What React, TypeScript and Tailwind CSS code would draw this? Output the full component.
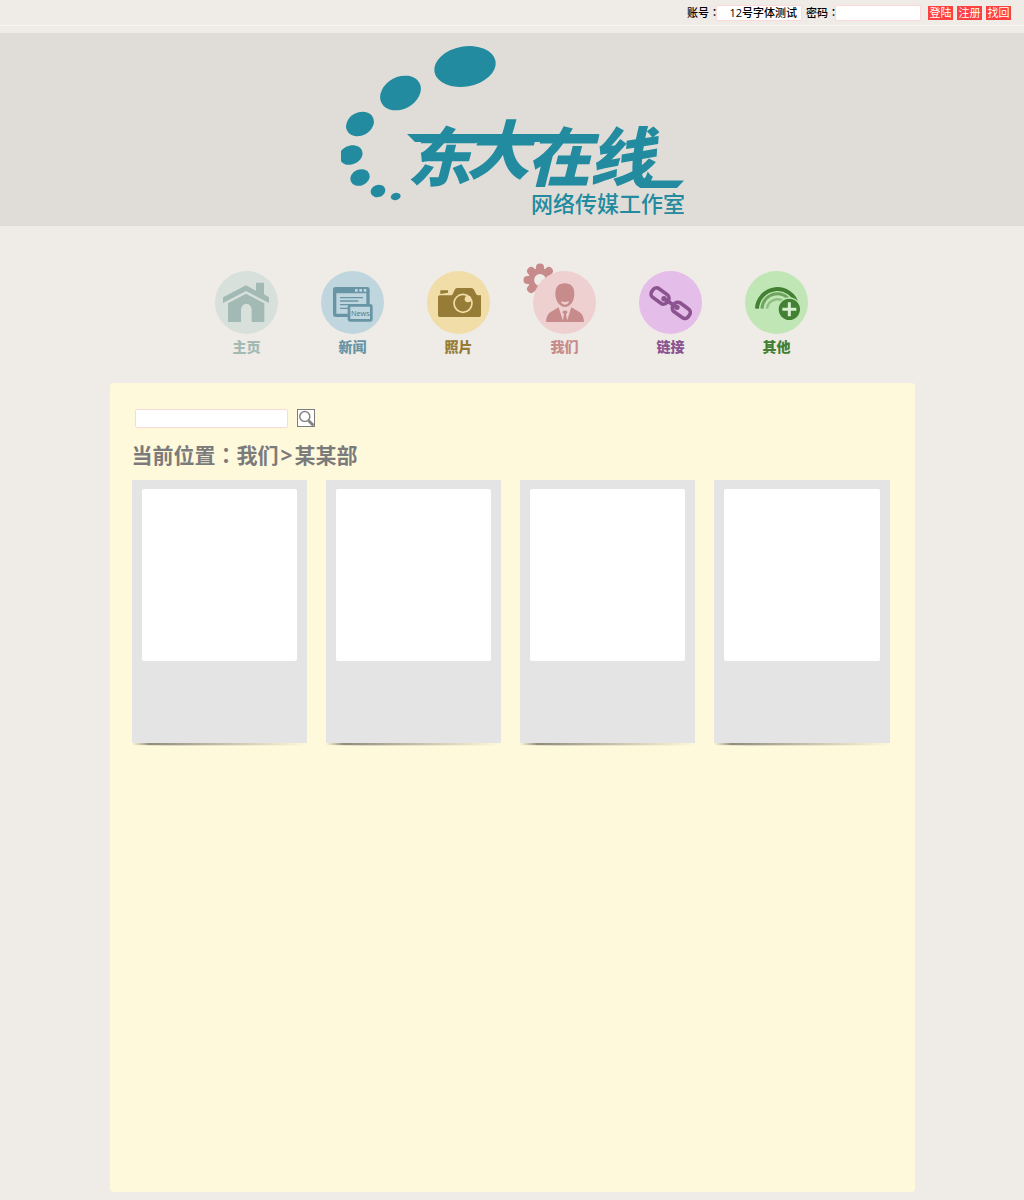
import type { ReactNode } from "react";

const cjk = "font-['Open_Sans','Noto_Sans_CJK_SC',sans-serif]";

function Colon() {
  return <span className="font-['Noto_Sans_CJK_TC',sans-serif]">：</span>;
}

function Logo() {
  return (
    <svg viewBox="340 40 344 178" className="block h-[178px] w-[344px]" role="img" aria-label="东大在线 网络传媒工作室">
      <g fill="#228b9f">
        <ellipse cx="465" cy="66.500" rx="31" ry="20" transform="rotate(-10 465 66.500)" />
        <ellipse cx="400.500" cy="93" rx="21.500" ry="16" transform="rotate(-28 400.500 93)" />
        <ellipse cx="360" cy="124" rx="14.500" ry="11.500" transform="rotate(-28 360 124)" />
        <path d="M341 151c3-4 9-6.500 14-5.500 5 .7 8 4.500 7.500 9-.5 5-6 9.500-12 10.200-4 .5-7.500-.7-9.500-3.500z" />
        <ellipse cx="360" cy="177.500" rx="10" ry="8" transform="rotate(-22 360 177.500)" />
        <ellipse cx="378" cy="191" rx="7.500" ry="6" transform="rotate(-18 378 191)" />
        <ellipse cx="395.700" cy="196.500" rx="5" ry="3.600" transform="rotate(-15 395.700 196.500)" />
        <path d="M407 134H599L594 142H415z" />
        <path d="M634 180.500H684L677 188H640z" />
        <text x="407 466 527 589" y="181 174 181 181" fontSize="64" fontWeight="900" fontStyle="italic" fontFamily="'Noto Sans CJK SC', sans-serif">
          东大在线
        </text>
        <text x="531" y="212" fontSize="22" fontWeight="500" fontFamily="'Noto Sans CJK SC', sans-serif">
          网络传媒工作室
        </text>
      </g>
    </svg>
  );
}

function HomeIcon() {
  return (
    <g fill="#a3b9b4">
      <path d="M24 79 93 43l30 16V35h24v35l15 9v17L93 60 24 96z" />
      <path d="M39 97 93 68l55 29v56h-38v-37a16 18 0 0 0-32 0v37H39z" />
    </g>
  );
}

function NewsIcon() {
  return (
    <g>
      <rect x="41" y="53" width="100" height="80" rx="4" fill="none" stroke="#6895a5" strokeWidth="10" />
      <path d="M38 50h106v17H38z" fill="#6895a5" />
      <path d="M102 54h8v8h-8zM115 54h8v8h-8zM128 54h8v8h-8z" fill="#bfd6de" />
      <path d="M57 80h69M57 90h55M57 101h69M57 112h40" stroke="#6895a5" strokeWidth="4" />
      <rect x="84" y="103" width="67" height="45" rx="4" fill="#bfd6de" stroke="#6895a5" strokeWidth="8" />
      <text x="90" y="134" fontSize="22" fill="#4f8196" fontFamily="'Noto Sans', sans-serif">
        News
      </text>
    </g>
  );
}

function CameraIcon() {
  return (
    <g fill="#967c36">
      <path d="M38 73h36q4-2 6-10l4-8q2-4 7-4h42q5 0 8 5l6 12q2 5 7 5h8v60q0 5-5 5H38q-5 0-5-5V78q0-5 5-5z" />
      <path d="M40 58h23v7l-23 4z" />
      <circle cx="108" cy="97" r="27" fill="none" stroke="#f1dda7" strokeWidth="5" />
      <circle cx="123" cy="84" r="10" fill="#f1dda7" />
    </g>
  );
}

function PersonIcon() {
  return (
    <g fill="#c88b8b">
      <path d="M95 37c19 0 29 12 29 31 0 22-13 40-28 40S67 91 67 69c0-20 9-32 28-32z" />
      <path d="M84 91q11 4 24 0-2 10-12 10t-12-10z" fill="#eed0d1" />
      <path d="M39 153q1-22 14-30l24-14 14 44zM153 153q-1-22-14-30l-24-14-14 44z" />
      <path d="M91 119h10l3 5-5 5 4 24H89l4-24-5-5z" />
    </g>
  );
}

function LinkIcon() {
  return (
    <g fill="none" stroke="#8b5490" strokeLinecap="round">
      <rect x="35" y="59" width="56" height="32" rx="13" strokeWidth="11" transform="rotate(36 63 75)" />
      <rect x="99" y="102" width="56" height="32" rx="13" strokeWidth="11" transform="rotate(36 127 118)" />
      <path d="M74 83 115 109" strokeWidth="11" />
      <circle cx="75" cy="83" r="4" strokeWidth="8" />
      <circle cx="114" cy="109" r="4" strokeWidth="8" />
    </g>
  );
}

function OtherIcon() {
  return (
    <g fill="none" stroke="#428033">
      <path d="M36 113a61 61 0 0 1 120-13" strokeWidth="12" />
      <path d="M51 113a46 46 0 0 1 89-15" stroke="#6fa35f" strokeWidth="9" />
      <path d="M66 113a31 31 0 0 1 59-10" stroke="#8fbf80" strokeWidth="8" />
      <circle cx="133" cy="115" r="34" fill="#428033" stroke="#bfe6b4" strokeWidth="4" />
      <path d="M133 94v42M112 115h42" stroke="#d7efd0" strokeWidth="9" />
    </g>
  );
}

type Item = { label: string; circle: string; text: string; icon: ReactNode; active?: boolean };

const items: Item[] = [
  { label: "主页", circle: "bg-[#d8e0dc]", text: "text-[#a3b9b4]", icon: <HomeIcon /> },
  { label: "新闻", circle: "bg-[#bfd6de]", text: "text-[#6895a5]", icon: <NewsIcon /> },
  { label: "照片", circle: "bg-[#f1dda7]", text: "text-[#967c36]", icon: <CameraIcon /> },
  { label: "我们", circle: "bg-[#eed0d1]", text: "text-[#c88b8b]", icon: <PersonIcon />, active: true },
  { label: "链接", circle: "bg-[#e4bde8]", text: "text-[#8b5490]", icon: <LinkIcon /> },
  { label: "其他", circle: "bg-[#bfe6b4]", text: "text-[#428033]", icon: <OtherIcon /> },
];

function Gear() {
  return (
    <svg viewBox="-52 -52 104 104" className="absolute -top-2 -left-[10px] size-[34px]" aria-hidden="true">
      <g stroke="#c88b8b" strokeWidth="25" strokeLinecap="round">
        <path d="M0-38V-25M0 38V25M-38 0H-25M38 0H25M-27-27-18-18M27 27 18 18M-27 27-18 18M27-27 18-18" />
      </g>
      <circle r="27" fill="#efebe6" stroke="#c88b8b" strokeWidth="18" />
    </svg>
  );
}

function NavItem({ item }: { item: Item }) {
  return (
    <a href="#" className="relative flex flex-col items-center">
      {item.active && <Gear />}
      <span className={`relative size-[63px] rounded-full ${item.circle}`}>
        <svg viewBox="0 0 189 189" className="block size-full" aria-hidden="true">
          {item.icon}
        </svg>
      </span>
      <span className={`mt-[5px] text-sm leading-4 font-black ${item.text}`}>{item.label}</span>
    </a>
  );
}

function TopButton({ children }: { children: ReactNode }) {
  return (
    <button type="button" className="h-[14px] w-[25px] bg-[#ff4040] text-center text-[11px] leading-[14px] text-white">
      {children}
    </button>
  );
}

export default function App() {
  return (
    <div className={`min-h-screen bg-[#efebe6] pb-2 ${cjk}`}>
      <form className="flex h-[33px] flex-col text-[11px] text-black">
        <div className="flex h-[25px] items-center justify-end pr-[13px]">
          <label htmlFor="account" className="relative z-10 -mr-1 font-medium">
            账号<Colon />
          </label>
          <input
            id="account"
            defaultValue="12号字体测试"
            className="h-4 w-[86px] rounded-xs border border-[#fbd9d9] bg-white pt-px pr-1 text-right font-medium outline-none"
          />
          <label htmlFor="password" className="relative z-10 -mr-1 ml-1 font-medium">
            密码<Colon />
          </label>
          <input
            id="password"
            type="password"
            className="h-4 w-[86px] rounded-xs border border-[#fbd9d9] bg-white px-1 outline-none"
          />
          <div className="ml-[7px] flex gap-1">
            <TopButton>登陆</TopButton>
            <TopButton>注册</TopButton>
            <TopButton>找回</TopButton>
          </div>
        </div>
        <div className="h-px bg-[#f8f6f3]" />
      </form>

      <header className="flex h-[193px] justify-center bg-[#e0ddd8] pt-[7px]">
        <Logo />
      </header>

      <nav className="flex justify-center gap-[43px] pt-[45px] pr-px">
        {items.map((item) => (
          <NavItem key={item.label} item={item} />
        ))}
      </nav>

      <main className="mx-auto mt-7 min-h-[809px] max-w-[805px] rounded bg-[#fff9db] pt-[26px] pr-[25px] pl-[22px]">
        <form className="flex items-start gap-[9px] pl-[3px]">
          <input
            type="search"
            aria-label="搜索"
            className="h-[19px] w-[153px] rounded-xs border border-[#fbd9d9] bg-white px-1 text-xs outline-none"
          />
          <button type="submit" aria-label="搜索" className="size-[18px] border border-[#7d7d7d] bg-white">
            <svg viewBox="0 0 16 16" className="block size-4" fill="none" stroke="#858585" aria-hidden="true">
              <circle cx="6.800" cy="6.500" r="5" strokeWidth="1.500" />
              <path d="m10.500 10.500 5 5" strokeWidth="3" />
            </svg>
          </button>
        </form>
        <h1 className="mt-[10px] text-[21px] leading-8 font-bold whitespace-nowrap text-[#7b7b7b]">
          当前位置
          <Colon />
          我们<span className="px-0.5">&gt;</span>某某部
        </h1>
        <div className="mt-[9px] grid grid-cols-4 gap-[19px]">
          {[0, 1, 2, 3].map((n) => (
            <article key={n}>
              <div className="h-[263px] bg-[#e4e4e4] px-[10px] pt-[9px]">
                <div className="h-[172px] rounded-xs bg-white" />
              </div>
              <div className="h-0.5 bg-linear-to-r from-transparent via-[#908c7d] via-10% to-transparent" />
              <div className="h-px bg-linear-to-r from-transparent via-[#dcd7bf] via-20% to-transparent" />
            </article>
          ))}
        </div>
      </main>
    </div>
  );
}
